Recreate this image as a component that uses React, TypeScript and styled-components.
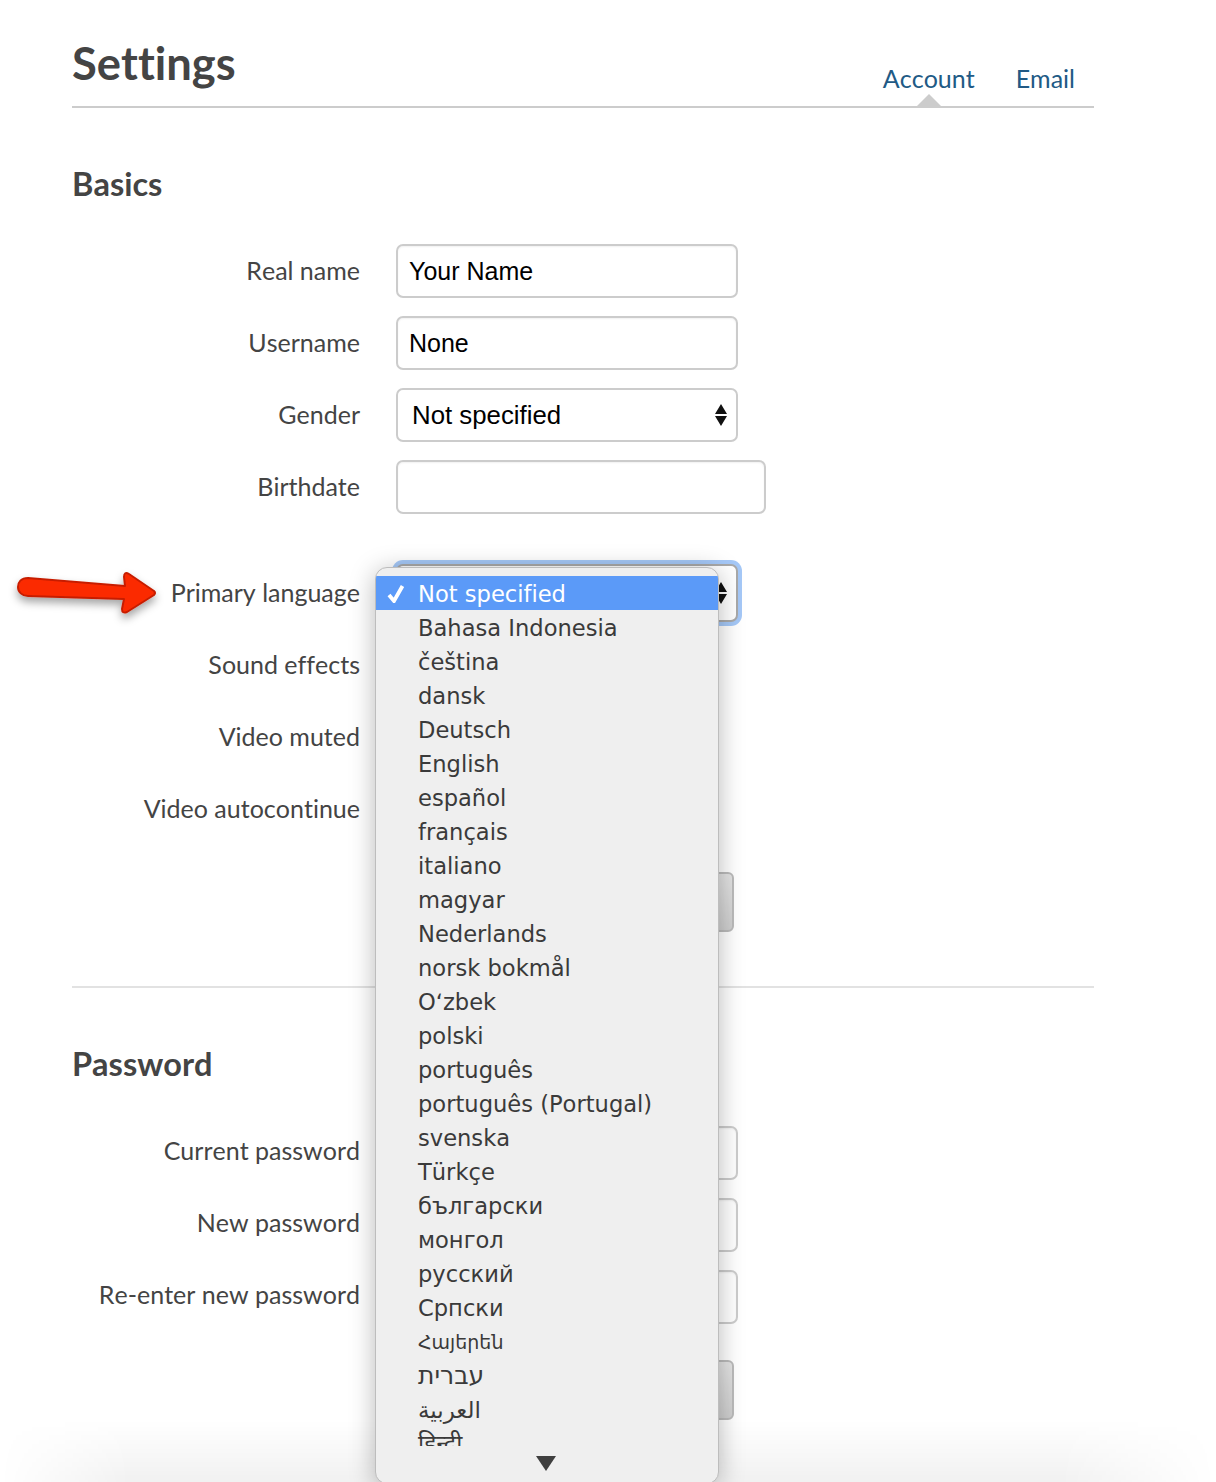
import React from 'react';
import styled, { createGlobalStyle } from 'styled-components';

const GlobalStyle = createGlobalStyle`
  html, body {
    margin: 0;
    padding: 0;
    background: #fff;
    font-family: Lato, 'Liberation Sans', sans-serif;
    font-kerning: none;
    font-variant-ligatures: none;
  }
`;

const SPage = styled.div`
  position: relative;
  width: 1216px;
  height: 1482px;
  overflow: hidden;
  padding: 0 122px 0 72px;
  box-sizing: border-box;
  background: #fff;
`;

const SHeader = styled.header`
  display: flex;
  justify-content: space-between;
  align-items: flex-end;
  height: 106px;
  border-bottom: 2px solid #ccc;
`;

const STitle = styled.h1`
  margin: 0 0 13px;
  font-size: 45.3px;
  line-height: 60px;
  font-weight: 700;
  color: #444;
`;

const STabs = styled.nav`
  display: flex;
  gap: 41px;
  padding-right: 19px;
`;

const STab = styled.a<{ $active?: boolean }>`
  position: relative;
  font-size: 25px;
  line-height: 34px;
  padding-bottom: 11px;
  color: #215a85;

  ${(p) =>
    p.$active &&
    `
    &::after {
      content: '';
      position: absolute;
      left: 50%;
      bottom: 0;
      margin-left: -12px;
      border: 12px solid transparent;
      border-top: 0;
      border-bottom-color: #ccc;
    }
  `}
`;

const SHeading = styled.h2`
  margin: 0;
  font-size: 32.5px;
  line-height: 40px;
  font-weight: 700;
  color: #444;
`;

const SSection = styled.section<{ $first?: boolean }>`
  padding-top: 56px;
  padding-bottom: 54px;
  border-bottom: ${(p) => (p.$first ? '2px solid #e2e2e2' : 'none')};
`;

const SForm = styled.div`
  display: flex;
  flex-direction: column;
  gap: 18px;
  margin-top: 40px;
`;

const SRow = styled.div<{ $gap?: number }>`
  display: grid;
  grid-template-columns: 288px auto;
  column-gap: 36px;
  height: 54px;
  align-items: center;
  margin-top: ${(p) => p.$gap || 0}px;
`;

const SLabel = styled.label`
  text-align: right;
  font-size: 25px;
  color: #444;
  padding-bottom: 2px;
`;

const SInput = styled.div<{ $wide?: boolean }>`
  width: ${(p) => (p.$wide ? 370 : 342)}px;
  height: 54px;
  box-sizing: border-box;
  padding: 0 9px 0 11px;
  display: flex;
  align-items: center;
  justify-content: space-between;
  border: 2px solid #ccc;
  border-radius: 7px;
  background: #fff;
  box-shadow: inset 0 1px 2px rgba(0, 0, 0, 0.06);
  font-family: 'Liberation Sans', sans-serif;
  font-kerning: normal;
  font-size: 25px;
  color: #000;
`;

const SSelect = styled(SInput)`
  box-shadow: none;
`;

const SPasswordInput = styled(SInput)`
  margin: 2px 0 -2px;
`;

const SFocusedSelect = styled(SSelect)`
  height: 58px;
  margin: -2px 0;
  border-color: #a9a9a9;
  box-shadow: 0 0 0 4px #a5c8f7;
`;

const SSelectText = styled.span`
  padding-left: 3px;
  font-size: 25.8px;
`;

const SStepper = styled.svg`
  width: 12px;
  height: 22px;
  fill: #111;
`;

const SButton = styled.button<{ $top: number }>`
  display: block;
  width: 338px;
  height: 60px;
  margin: ${(p) => p.$top}px 0 0 324px;
  border: 2px solid #bbb;
  border-radius: 6px;
  background: linear-gradient(#e4e4e4, #cfcfcf);
`;

const SArrow = styled.svg`
  position: absolute;
  left: 12px;
  top: 564px;
  width: 150px;
  height: 56px;
  overflow: visible;
`;

const SShade = styled.div`
  position: absolute;
  left: 0;
  right: 0;
  bottom: 0;
  height: 62px;
  background: linear-gradient(rgba(0, 0, 0, 0), rgba(0, 0, 0, 0.055));
  mask-image: linear-gradient(to right, transparent 0, #000 130px, #000 1060px, transparent 1216px);
  pointer-events: none;
`;

const SPopup = styled.div`
  position: absolute;
  left: 375px;
  top: 567px;
  width: 344px;
  height: 917px;
  box-sizing: border-box;
  padding-top: 8px;
  overflow: hidden;
  background: #efefef;
  border: 1px solid #bdbdbd;
  border-radius: 12px;
  box-shadow: 0 4px 26px rgba(0, 0, 0, 0.28);
  font-family: 'DejaVu Sans', 'Noto Sans', sans-serif;
  font-size: 22.6px;
  color: #3a3a3a;
`;

const SOption = styled.div<{ $selected?: boolean; $size?: number }>`
  position: relative;
  height: 34px;
  line-height: 36px;
  padding-left: 42px;
  white-space: nowrap;
  font-size: ${(p) => (p.$size ? `${p.$size}px` : 'inherit')};
  background: ${(p) => (p.$selected ? '#5b9af8' : 'transparent')};
  color: ${(p) => (p.$selected ? '#fff' : 'inherit')};
`;

const SOptionList = styled.div`
  height: 870px;
  overflow: hidden;
`;

const SCheck = styled.svg`
  position: absolute;
  left: 11px;
  top: 9px;
  width: 18px;
  height: 18px;
`;

const SScrollDown = styled.div`
  display: flex;
  justify-content: center;
  padding: 10px 2px 0 0;
`;

const languages: { name: string; size?: number }[] = [
  { name: 'Bahasa Indonesia' },
  { name: 'čeština' },
  { name: 'dansk' },
  { name: 'Deutsch' },
  { name: 'English' },
  { name: 'español' },
  { name: 'français' },
  { name: 'italiano' },
  { name: 'magyar' },
  { name: 'Nederlands' },
  { name: 'norsk bokmål' },
  { name: 'Oʻzbek' },
  { name: 'polski' },
  { name: 'português' },
  { name: 'português (Portugal)' },
  { name: 'svenska' },
  { name: 'Türkçe' },
  { name: 'български' },
  { name: 'монгол' },
  { name: 'русский' },
  { name: 'Српски' },
  { name: 'Հայերեն', size: 19 },
  { name: 'עברית', size: 25 },
  { name: 'العربية', size: 23 },
  { name: 'हिन्दी', size: 23.5 },
];

const Stepper = () => (
  <SStepper viewBox="0 0 12 22">
    <path d="M6 0 L12 10 H0 Z M6 22 L0 12 H12 Z" />
  </SStepper>
);

const App = () => (
  <SPage>
    <GlobalStyle />
    <SHeader>
      <STitle>Settings</STitle>
      <STabs>
        <STab $active>Account</STab>
        <STab>Email</STab>
      </STabs>
    </SHeader>

    <SSection $first>
      <SHeading>Basics</SHeading>
      <SForm>
        <SRow>
          <SLabel>Real name</SLabel>
          <SInput>Your Name</SInput>
        </SRow>
        <SRow>
          <SLabel>Username</SLabel>
          <SInput>None</SInput>
        </SRow>
        <SRow>
          <SLabel>Gender</SLabel>
          <SSelect>
            <SSelectText>Not specified</SSelectText>
            <Stepper />
          </SSelect>
        </SRow>
        <SRow>
          <SLabel>Birthdate</SLabel>
          <SInput $wide />
        </SRow>
        <SRow $gap={34}>
          <SLabel>Primary language</SLabel>
          <SFocusedSelect>
            <span />
            <Stepper />
          </SFocusedSelect>
        </SRow>
        <SRow>
          <SLabel>Sound effects</SLabel>
        </SRow>
        <SRow>
          <SLabel>Video muted</SLabel>
        </SRow>
        <SRow>
          <SLabel>Video autocontinue</SLabel>
        </SRow>
      </SForm>
      <SButton $top={36} />
    </SSection>

    <SSection>
      <SHeading>Password</SHeading>
      <SForm>
        <SRow>
          <SLabel>Current password</SLabel>
          <SPasswordInput />
        </SRow>
        <SRow>
          <SLabel>New password</SLabel>
          <SPasswordInput />
        </SRow>
        <SRow>
          <SLabel>Re-enter new password</SLabel>
          <SPasswordInput />
        </SRow>
      </SForm>
      <SButton $top={38} />
    </SSection>

    <SShade />

    <SArrow viewBox="0 0 150 56">
      <defs>
        <filter id="arrowShadow" x="-10%" y="-30%" width="120%" height="170%">
          <feDropShadow dx="0" dy="5" stdDeviation="4" floodColor="#000" floodOpacity="0.35" />
        </filter>
      </defs>
      <path
        d="M16 14 C9 14 6 18 6 23 C6 28 10 32 16 32 L112 35 L110 45 Q110 50 115 48 L142 31 Q144 29 142 27 L117 10 Q112 7 112 13 L113 22 Z"
        fill="#fb2c00"
        stroke="#c71e00"
        strokeWidth="2"
        strokeLinejoin="round"
        filter="url(#arrowShadow)"
      />
    </SArrow>

    <SPopup>
      <SOptionList>
        <SOption $selected>
          <SCheck viewBox="0 0 18 18">
            <path d="M2 10 L7 16 L15.5 1" fill="none" stroke="#fff" strokeWidth="3.8" />
          </SCheck>
          Not specified
        </SOption>
        {languages.map((lang) => (
          <SOption key={lang.name} $size={lang.size}>
            {lang.name}
          </SOption>
        ))}
      </SOptionList>
      <SScrollDown>
        <svg width="20" height="15" viewBox="0 0 20 15">
          <path d="M0 0 H20 L10 15 Z" fill="#3f3f3f" />
        </svg>
      </SScrollDown>
    </SPopup>
  </SPage>
);

export default App;
